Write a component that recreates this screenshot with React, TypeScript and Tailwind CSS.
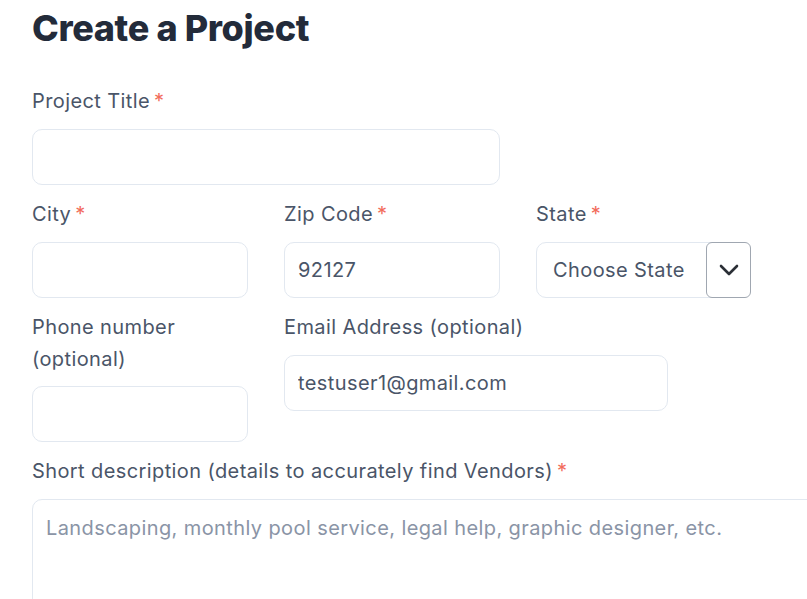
const labelCls = "block text-[20px] leading-8 tracking-[0.02em] text-[#4a5568]";
const inputCls =
  "mt-3 h-14 w-full rounded-[10px] border border-[#e2e8f0] bg-white px-[13px] text-[20px] tracking-[0.02em] text-[#4a5568] outline-none placeholder:text-[#8a94a6]";

function Req() {
  return <span className="ml-1 text-[#f26b5b]">*</span>;
}

export default function App() {
  return (
    <main
      className="h-[599px] w-[807px] overflow-hidden bg-white pl-8 pt-2"
      style={{ fontFamily: "Inter, 'Noto Sans', sans-serif" }}
    >
      <h1 className="text-[36px] leading-10 font-extrabold tracking-[-0.01em] text-[#232b3a]">Create a Project</h1>

      <div className="mt-[37px] flex flex-col gap-y-[13px]">
        <div className="w-[468px]">
          <label className={labelCls}>
            Project Title
            <Req />
          </label>
          <input className={inputCls} />
        </div>

        <div className="flex gap-9">
          <div className="w-[216px]">
            <label className={labelCls}>
              City
              <Req />
            </label>
            <input className={inputCls} />
          </div>
          <div className="w-[216px]">
            <label className={labelCls}>
              Zip Code
              <Req />
            </label>
            <input className={inputCls} defaultValue="92127" />
          </div>
          <div className="w-[215px]">
            <label className={labelCls}>
              State
              <Req />
            </label>
            <div className="mt-3 flex h-14 items-stretch rounded-[10px] border border-[#e2e8f0] bg-white">
              <span className="flex flex-1 items-center pl-4 text-[20px] tracking-[0.02em] text-[#4a5568]">Choose State</span>
              <span className="-my-px -mr-px flex w-[45px] items-center justify-center rounded-[6px] border border-[#a0a7b1] bg-white">
                <svg width="20" height="12" viewBox="0 0 20 12" fill="none">
                  <path d="M2 2l8 8 8-8" stroke="#2b2f36" strokeWidth="2.6" strokeLinecap="round" strokeLinejoin="round" />
                </svg>
              </span>
            </div>
          </div>
        </div>

        <div className="flex gap-9">
          <div className="w-[216px]">
            <label className={labelCls}>Phone number (optional)</label>
            <input className="mt-[11px] h-14 w-full rounded-[10px] border border-[#e2e8f0] bg-white px-[13px] text-[20px] text-[#4a5568] outline-none" />
          </div>
          <div className="w-[384px]">
            <label className={labelCls}>Email Address (optional)</label>
            <input className={inputCls} defaultValue="testuser1@gmail.com" />
          </div>
        </div>

        <div className="w-[800px]">
          <label className={labelCls}>
            Short description (details to accurately find Vendors)
            <Req />
          </label>
          <textarea
            className="mt-3 h-[200px] w-full resize-none rounded-[10px] border border-[#e2e8f0] bg-white px-[13px] py-[14px] text-[20px] leading-7 tracking-[0.02em] text-[#4a5568] outline-none placeholder:text-[#8a94a6]"
            placeholder="Landscaping, monthly pool service, legal help, graphic designer, etc."
          />
        </div>
      </div>
    </main>
  );
}
